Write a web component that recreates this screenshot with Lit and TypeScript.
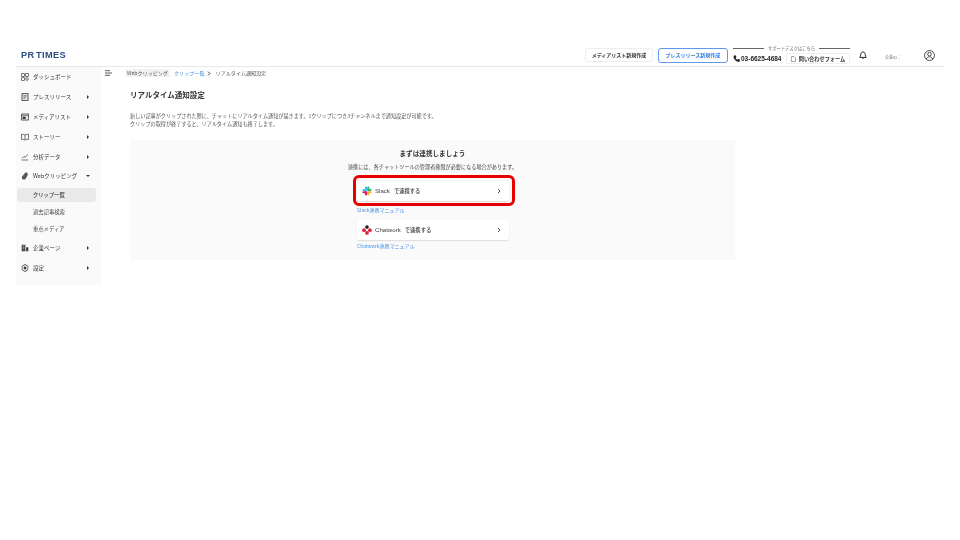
import { LitElement, html, css, svg } from "lit";
import { customElement } from "lit/decorators.js";

const ic = (body: unknown) => html`<svg class="ic" viewBox="0 0 12 12" fill="none" stroke="#333" stroke-width="1">${body}</svg>`;
const icons: Record<string, unknown> = {
  dash: ic(svg`<rect x="1" y="1" width="4" height="4"/><rect x="7" y="1" width="4" height="4"/><rect x="1" y="7" width="4" height="4"/><rect x="7" y="7" width="4" height="4" rx="2"/>`),
  press: ic(svg`<rect x="1.500" y="1" width="9" height="10" stroke-width="1.300"/><path d="M3.500 4h5M3.500 6h5M3.500 8h3"/>`),
  media: ic(svg`<rect x="1" y="1.500" width="10" height="9" stroke-width="1.200"/><path d="M1 4h10"/><rect x="3" y="6" width="3.500" height="2.500" fill="#333"/>`),
  story: ic(svg`<path d="M6 3C4.500 2 3 2 .7 2v7.500c2.300 0 3.800 0 5.300 1 1.500-1 3-1 5.300-1V2C9 2 7.500 2 6 3zM6 3v7"/>`),
  chart: ic(svg`<path d="M1 10.500h10M1.500 8l3-3 2 1.500L10 2"/>`),
  clip: html`<svg class="ic" viewBox="0 0 12 12"><path d="M9 1c1.500 1 1.500 2.500.5 4.500L7 10c-1 1.500-3 1.800-4.500 1S.8 8 2 6.500L5 2.500C6 1.200 7.800.3 9 1z" fill="#555"/></svg>`,
  corp: html`<svg class="ic" viewBox="0 0 12 12"><path d="M1 1h5.500v10H1zM7.500 5H11v6H7.500z" fill="#444"/><path d="M2.500 3h2.500M2.500 5h2.500M2.500 7h2.500" stroke="#fff" stroke-width=".7"/></svg>`,
  gear: ic(svg`<path d="M4.500 1h3l.4 1.500 1.500-.4 1.500 2.600L9.300 6l1.100 1.300-1.500 2.600-1.500-.4L7.500 11h-3l-.4-1.500-1.500.4L1.100 7.300 2.700 6 1.100 4.700l1.500-2.600 1.500.4z"/><circle cx="6" cy="6" r="1.700" fill="#333"/>`),
};

const nav: [string, string, boolean][] = [
  ["dash", "ダッシュボード", false],
  ["press", "プレスリリース", true],
  ["media", "メディアリスト", true],
  ["story", "ストーリー", true],
  ["chart", "分析データ", true],
];

const slack = html`<svg class="logo" viewBox="0 0 12 12">
  <rect x="0.500" y="3.500" width="5.500" height="2.500" rx="1.250" fill="#36c5f0"/><rect x="3.500" y="0.500" width="2.500" height="5" rx="1.250" fill="#36c5f0"/>
  <rect x="6.300" y="0.500" width="2.500" height="5.500" rx="1.250" fill="#2eb67d"/><rect x="6.300" y="3.500" width="5.200" height="2.500" rx="1.250" fill="#2eb67d"/>
  <rect x="6.300" y="6.300" width="5.200" height="2.500" rx="1.250" fill="#ecb22e"/><rect x="6.300" y="6.300" width="2.500" height="5.200" rx="1.250" fill="#ecb22e"/>
  <rect x="0.500" y="6.300" width="5.500" height="2.500" rx="1.250" fill="#e01e5a"/><rect x="3.500" y="6.300" width="2.500" height="5.200" rx="1.250" fill="#e01e5a"/>
</svg>`;
const chatwork = html`<svg class="logo" viewBox="0 0 12 12">
  <circle cx="6" cy="2.500" r="2.200" fill="#2a1a20"/>
  <circle cx="2.500" cy="6.200" r="2.300" fill="#e0283c"/><circle cx="9.500" cy="6.200" r="2.300" fill="#e0283c"/><circle cx="6" cy="9.500" r="2.300" fill="#e0283c"/>
</svg>`;
const chev = html`<svg class="chev" viewBox="0 0 6 8" fill="none" stroke="#333" stroke-width="1.300"><path d="M1.500 1l3 3-3 3"/></svg>`;

@customElement("app-root")
export class AppRoot extends LitElement {
  static styles = css`
    :host { display: block; width: 960px; height: 540px; background: #fff; font-family: "Noto Sans CJK JP", "Liberation Sans", sans-serif; color: #333; overflow: hidden; }
    .page { padding: 44px 16px 0; filter: blur(.5px); }
    header { display: flex; align-items: center; height: 22px; border-bottom: 1px solid #e8e8e8; padding-left: 5px; }
    .brand { font: 700 9.200px "Liberation Sans", sans-serif; color: #2a4f85; letter-spacing: .4px; word-spacing: -1.500px; flex: 1; }
    .btn { display: flex; align-items: center; justify-content: center; height: 14px; padding-bottom: 2px; border: 1px solid #eee; border-radius: 3px; font-size: 5px; font-weight: 700; box-sizing: border-box; background: #fff; }
    .b1 { width: 68px; margin-right: 5px; }
    .b2 { width: 70px; margin: 1px 5px 0 0; border-color: #5b9be8; color: #2f7de0; height: 15px; }
    .support { width: 117px; margin-right: 9px; align-self: flex-start; margin-top: 1px; }
    .sup-t { display: flex; align-items: center; gap: 4px; font-size: 4.300px; color: #666; line-height: 6px; }
    .sup-t i { flex: 1; border-top: 1px solid #666; }
    .sup-r { display: flex; align-items: center; margin-top: 2px; }
    .tel { font: 700 6.500px "Liberation Sans", sans-serif; color: #222; flex: 1; display: flex; align-items: center; gap: 1px; white-space: nowrap; }
    .tel svg { width: 7px; height: 7px; }
    .form { width: 64px; height: 11px; border: 1px solid #eee; border-radius: 2px; display: flex; align-items: center; justify-content: center; gap: 3px; font-size: 5.200px; font-weight: 700; box-sizing: border-box; }
    .form svg { width: 5px; height: 6px; }
    .bell { width: 8px; height: 9px; margin-right: 18px; }
    .corp { font-size: 4px; color: #777; width: 39px; padding-top: 4px; }
    .user { width: 11px; height: 11px; margin-right: 9px; }
    .body { display: grid; grid-template-columns: 85px 1fr; align-items: start; }
    aside { background: #fafafa; height: 218px; box-sizing: border-box; }
    .item { display: flex; align-items: center; height: 20px; padding-left: 5px; font-size: 5.500px; color: #333; }
    .ic { width: 8px; height: 8px; margin-right: 4px; flex: none; }
    .item span { width: 43.500px; white-space: nowrap; }
    .arrow { width: 0; height: 0; margin-left: 10px; border-left: 2.500px solid #333; border-top: 2px solid transparent; border-bottom: 2px solid transparent; }
    .arrow.down { border-top: 2.500px solid #333; border-bottom: 0; border-left: 2px solid transparent; border-right: 2px solid transparent; margin-left: 9px; }
    .sub { display: flex; align-items: center; height: 14px; margin: 1.500px 5px 1.500px 1px; padding-left: 16px; font-size: 5.300px; color: #444; border-radius: 3px; }
    .sub.on { background: #e9e9e9; font-weight: 500; color: #333; }
    .web { margin: -1px 0 .5px; }
    .subs { margin-bottom: .5px; display: flex; flex-direction: column; }
    main { padding: 1px 0 0 4px; }
    .top { display: flex; align-items: center; height: 10px; font-size: 5.100px; line-height: 8px; color: #555; }
    .burger { width: 7px; height: 6px; margin-right: 13px; }
    .tag { background: #f2f2f2; padding: 0 2px; border-radius: 1px; margin-right: 4px; }
    .link { color: #4a90e2; }
    .crumb-c { width: 4px; height: 5px; margin: 0 5px 0 2px; }
    .content { padding-left: 25px; }
    h1 { margin: 11px 0 0; font-size: 7.500px; line-height: 12px; font-weight: 700; color: #333; }
    .desc { margin: 11px 0 0; font-size: 5.130px; line-height: 8px; color: #555; }
    .panel { margin-top: 12px; width: 605px; height: 120px; background: #fafafa; display: flex; flex-direction: column; align-items: center; }
    h2 { margin: 8px 0 0; font-size: 6.600px; line-height: 11px; font-weight: 700; color: #333; }
    .note { font-size: 5.150px; line-height: 8px; margin-top: 4px; color: #444; }
    .links { width: 152px; margin: 10px 0 0 1px; display: flex; flex-direction: column; }
    .card { position: relative; display: flex; align-items: center; height: 20px; width: 152px; background: #fff; border-radius: 2px; box-shadow: 0 1px 1.500px rgba(0,0,0,.12); padding: 0 8px 0 5px; box-sizing: border-box; font-size: 5.300px; color: #333; }
    .logo { width: 10px; height: 10px; margin-right: 3px; flex: none; }
    .card b { font: 500 6.100px "Liberation Sans", sans-serif; margin: 0 4px 1px 0; color: #444; }
    .card span { flex: 1; font-weight: 500; }
    .chev { width: 4px; height: 6px; }
    .hi::after { content: ""; position: absolute; inset: -6px -6px -5px -4px; border: 3px solid #e60000; border-radius: 6px; }
    .ml { font-size: 5px; line-height: 8px; color: #4a90e2; margin-top: 5px; }
    .ml + .card { margin-top: 6px; }
    .ml.last { margin-top: 2px; }
  `;

  render() {
    return html`<div class="page">
      <header>
        <div class="brand">PR TIMES</div>
        <div class="btn b1">メディアリスト新規作成</div>
        <div class="btn b2">プレスリリース新規作成</div>
        <div class="support">
          <div class="sup-t"><i></i>サポートデスクはこちら<i></i></div>
          <div class="sup-r">
            <div class="tel"><svg viewBox="0 0 12 12"><path d="M2 1l2.500-.5 1.500 3-1.500 1.500c.5 1.500 1.500 2.500 3 3L9 6.500l3 1.500-.5 2.500C11 11.500 9.500 12 7 11 4 9.500 2 7 1 4.500.7 3 1 2 2 1z" fill="#222"/></svg>03-6625-4684</div>
            <div class="form"><svg viewBox="0 0 10 12" fill="none" stroke="#555"><path d="M1 1h5l3 3v7H1z"/></svg>問い合わせフォーム</div>
          </div>
        </div>
        <svg class="bell" viewBox="0 0 12 14"><path d="M6 1.500c-2.500 0-3.500 2-3.500 4.500 0 2-1 3-1.500 4h10c-.5-1-1.500-2-1.500-4 0-2.500-1-4.500-3.500-4.500z" fill="none" stroke="#222" stroke-width="1.500"/><path d="M4.500 11.500h3v1h-3z" fill="#222"/></svg>
        <div class="corp">企業ID：</div>
        <svg class="user" viewBox="0 0 14 14" fill="none" stroke="#222"><circle cx="7" cy="7" r="6.300"/><circle cx="7" cy="5.300" r="2.300"/><path d="M2.800 11.500c1-2 2.500-2.800 4.200-2.800s3.200.8 4.200 2.800"/></svg>
      </header>
      <div class="body">
        <aside>
          ${nav.map(([i, t, a]) => html`<div class="item">${icons[i]}<span>${t}</span>${a ? html`<i class="arrow"></i>` : ""}</div>`)}
          <div class="item web">${icons.clip}<span>Webクリッピング</span><i class="arrow down"></i></div>
          <div class="subs">
            <div class="sub on">クリップ一覧</div>
            <div class="sub">過去記事検索</div>
            <div class="sub">重点メディア</div>
          </div>
          <div class="item">${icons.corp}<span>企業ページ</span><i class="arrow"></i></div>
          <div class="item">${icons.gear}<span>設定</span><i class="arrow"></i></div>
        </aside>
        <main>
          <div class="top">
            <svg class="burger" viewBox="0 0 7 6" fill="none" stroke="#333" stroke-width=".8"><path d="M0 .7h5M0 3h5M0 5.300h5M5.500 2l1 1-1 1"/></svg>
            <span class="tag">Webクリッピング</span>
            <span class="link">クリップ一覧</span>
            <svg class="crumb-c" viewBox="0 0 6 8" fill="none" stroke="#333" stroke-width="1.500"><path d="M1.500 1l3 3-3 3"/></svg>
            <span>リアルタイム通知設定</span>
          </div>
          <div class="content">
            <h1>リアルタイム通知設定</h1>
            <p class="desc">新しい記事がクリップされた際に、チャットにリアルタイム通知が届きます。1クリップにつき3チャンネルまで通知設定が可能です。<br>クリップの取得が終了すると、リアルタイム通知も終了します。</p>
            <div class="panel">
              <h2>まずは連携しましょう</h2>
              <div class="note">連携には、各チャットツールの管理者権限が必要になる場合があります。</div>
              <div class="links">
                <div class="card hi">${slack}<b>Slack</b><span>で連携する</span>${chev}</div>
                <div class="ml">Slack連携マニュアル</div>
                <div class="card">${chatwork}<b>Chatwork</b><span>で連携する</span>${chev}</div>
                <div class="ml last">Chatwork連携マニュアル</div>
              </div>
            </div>
          </div>
        </main>
      </div>
    </div>`;
  }
}
